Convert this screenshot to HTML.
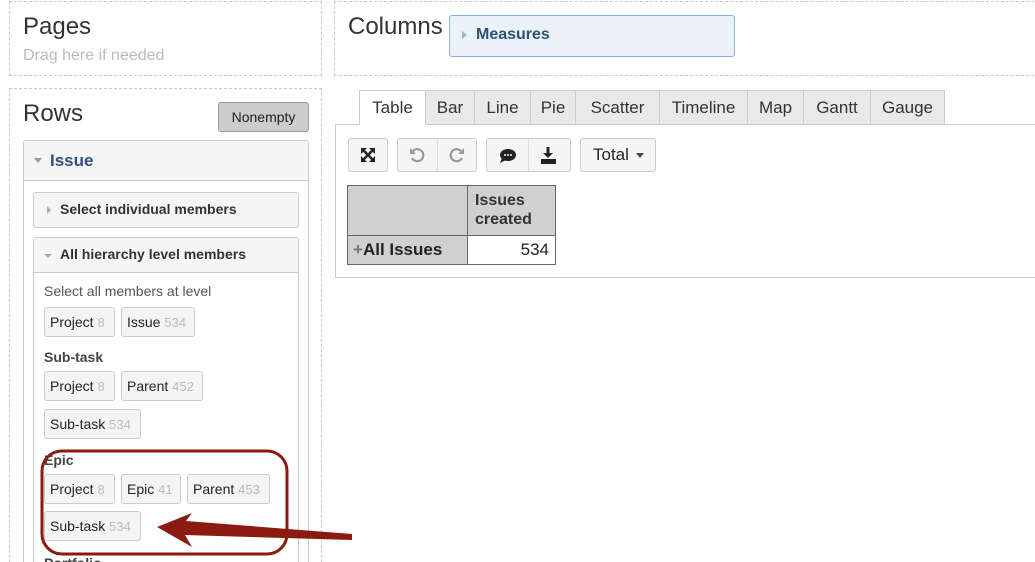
<!DOCTYPE html>
<html style="overflow:hidden;height:562px"><head><meta charset="utf-8"><style>
*{box-sizing:border-box}
body{margin:0;width:1035px;height:562px;overflow:hidden;background:#fff;font-family:"Liberation Sans",Arial,sans-serif;color:#333;position:relative}
.a{position:absolute}
.dash{border:1px dashed #c8c8c8}
.h{font-size:24px;color:#333}
.chip{position:absolute;height:30px;border:1px solid #ccc;border-radius:3px;background:#f4f4f4;font-size:14px;line-height:28px;padding:0 5px;color:#222;white-space:nowrap}
.chip span{color:#bbb;font-size:13px}
.lbl{position:absolute;font-size:14px;font-weight:bold;color:#444}
.tab{position:absolute;top:90px;height:35px;border:1px solid #ccc;border-left:none;background:#e9e9e9;font-size:17px;line-height:34px;text-align:center;color:#333}
.btn{position:absolute;top:138px;height:34px;border:1px solid #ccc;border-radius:3px;background:#f5f5f5}
.tri{display:inline-block;width:0;height:0}
</style></head><body>
<div class="a dash" style="left:9px;top:1px;width:313px;height:75px"></div>
<div class="a h" style="left:23px;top:13px">Pages</div>
<div class="a" style="left:23px;top:47px;font-size:16px;color:#bbb">Drag here if needed</div>

<div class="a dash" style="left:334px;top:1px;width:710px;height:75px"></div>
<div class="a h" style="left:348px;top:13px">Columns</div>
<div class="a" style="left:449px;top:15px;width:286px;height:42px;background:#eaf1f8;border:1px solid #8ab4dc;border-radius:3px"></div>
<div class="a" style="left:462px;top:31px;border-left:5px solid #9bb;border-top:4px solid transparent;border-bottom:4px solid transparent"></div>
<div class="a" style="left:476px;top:26px;font-size:16px;font-weight:bold;color:#2f5178">Measures</div>

<div class="a dash" style="left:9px;top:88px;width:313px;height:490px"></div>
<div class="a h" style="left:23px;top:100px">Rows</div>
<div class="a" style="left:218px;top:102px;width:91px;height:30px;background:#ccc;border:1px solid #999;border-radius:3px;font-size:14px;line-height:28px;text-align:center;color:#222">Nonempty</div>

<div class="a" style="left:23px;top:140px;width:286px;height:440px;border:1px solid #ccc;border-radius:3px"></div>
<div class="a" style="left:24px;top:141px;width:284px;height:40px;background:#f5f5f5;border-bottom:1px solid #ccc"></div>
<div class="a" style="left:34px;top:158px;border-top:5px solid #999;border-left:4px solid transparent;border-right:4px solid transparent"></div>
<div class="a" style="left:50px;top:151px;font-size:17px;font-weight:bold;color:#2f5178">Issue</div>

<div class="a" style="left:33px;top:192px;width:266px;height:36px;border:1px solid #ccc;border-radius:3px;background:#f5f5f5"></div>
<div class="a" style="left:47px;top:206px;border-left:4px solid #aaa;border-top:4px solid transparent;border-bottom:4px solid transparent"></div>
<div class="a" style="left:60px;top:201px;font-size:14px;font-weight:bold;color:#333">Select individual members</div>

<div class="a" style="left:33px;top:237px;width:266px;height:340px;border:1px solid #ccc;border-radius:3px"></div>
<div class="a" style="left:34px;top:238px;width:264px;height:35px;background:#f5f5f5;border-bottom:1px solid #ccc"></div>
<div class="a" style="left:44px;top:254px;border-top:4px solid #aaa;border-left:4px solid transparent;border-right:4px solid transparent"></div>
<div class="a" style="left:60px;top:246px;font-size:14px;font-weight:bold;color:#333">All hierarchy level members</div>

<div class="a" style="left:44px;top:283px;font-size:14px;color:#555">Select all members at level</div>
<div class="chip" style="left:44px;top:307px;width:71px">Project <span>8</span></div>
<div class="chip" style="left:121px;top:307px;width:74px">Issue <span>534</span></div>
<div class="lbl" style="left:44px;top:349px">Sub-task</div>
<div class="chip" style="left:44px;top:371px;width:71px">Project <span>8</span></div>
<div class="chip" style="left:121px;top:371px;width:82px">Parent <span>452</span></div>
<div class="chip" style="left:44px;top:409px;width:97px">Sub-task <span>534</span></div>
<div class="lbl" style="left:44px;top:452px">Epic</div>
<div class="chip" style="left:44px;top:474px;width:71px">Project <span>8</span></div>
<div class="chip" style="left:121px;top:474px;width:60px">Epic <span>41</span></div>
<div class="chip" style="left:187px;top:474px;width:83px">Parent <span>453</span></div>
<div class="chip" style="left:44px;top:511px;width:97px">Sub-task <span>534</span></div>
<div class="lbl" style="left:44px;top:555px">Portfolio</div>

<svg class="a" style="left:0;top:0" width="1035" height="562">
<rect x="42" y="451" width="245" height="103" rx="20" fill="none" stroke="#8b1a10" stroke-width="3"/>
<polygon points="352,534 352,540 185,535 192,547 157,527 192,513 186,521" fill="#8b1a10"/>
</svg>

<div class="a" style="left:335px;top:124px;width:710px;height:154px;border:1px solid #ccc"></div>
<div class="tab" style="left:359px;width:67px;background:#fff;border-left:1px solid #ccc;border-bottom-color:#fff">Table</div>
<div class="tab" style="left:426px;width:49px">Bar</div>
<div class="tab" style="left:475px;width:56px">Line</div>
<div class="tab" style="left:531px;width:45px">Pie</div>
<div class="tab" style="left:576px;width:84px">Scatter</div>
<div class="tab" style="left:660px;width:88px">Timeline</div>
<div class="tab" style="left:748px;width:56px">Map</div>
<div class="tab" style="left:804px;width:67px">Gantt</div>
<div class="tab" style="left:871px;width:74px">Gauge</div>

<div class="btn" style="left:348px;width:40px"><svg width="38" height="32"><g stroke="#222" stroke-width="2.4" fill="#222"><path d="M14 11 L24 21 M24 11 L14 21"/></g><g fill="#222"><path d="M12 9h6l-6 6z M26 9v6l-6-6z M12 23v-6l6 6z M26 23h-6l6-6z"/></g></svg></div>
<div class="btn" style="left:397px;width:80px"><div class="a" style="left:39px;top:0;width:1px;height:32px;background:#ddd"></div>
<svg class="a" style="left:0;top:0" width="78" height="32"><g fill="none" stroke="#999" stroke-width="2.2"><path d="M15 12 A6 6 0 1 1 14 19"/><path d="M63 12 A6 6 0 1 0 64 19"/></g><path d="M12 9v6h6z" fill="#999"/><path d="M66 9v6h-6z" fill="#999"/></svg></div>
<div class="btn" style="left:486px;width:85px"><div class="a" style="left:41px;top:0;width:1px;height:32px;background:#ddd"></div>
<svg class="a" style="left:0;top:0" width="83" height="32"><ellipse cx="21" cy="16" rx="8" ry="6" fill="#222"/><path d="M15 19 L13 24 L19 21z" fill="#222"/><circle cx="18" cy="16" r="1" fill="#fff"/><circle cx="21" cy="16" r="1" fill="#fff"/><circle cx="24" cy="16" r="1" fill="#fff"/><path d="M61 8v8" stroke="#222" stroke-width="3"/><path d="M56 14h10l-5 5z" fill="#222"/><rect x="54" y="20" width="15" height="5" fill="#222"/></svg></div>
<div class="btn" style="left:580px;width:76px;font-size:17px;line-height:32px;padding-left:12px;color:#222">Total <span class="tri" style="border-top:5px solid #444;border-left:4px solid transparent;border-right:4px solid transparent;vertical-align:middle;margin-left:2px"></span></div>

<div class="a" style="left:347px;top:185px;width:209px;height:80px;border:1px solid #666;background:#d0d0d0"></div>
<div class="a" style="left:467px;top:185px;width:1px;height:80px;background:#666"></div>
<div class="a" style="left:347px;top:235px;width:209px;height:1px;background:#666"></div>
<div class="a" style="left:468px;top:236px;width:87px;height:28px;background:#fff"></div>
<div class="a" style="left:475px;top:191px;font-size:16px;font-weight:bold;color:#333;line-height:19px">Issues<br>created</div>
<div class="a" style="left:353px;top:240px;font-size:17px;font-weight:bold;color:#222"><span style="color:#777">+</span>All Issues</div>
<div class="a" style="left:470px;top:240px;width:79px;text-align:right;font-size:17px;color:#222">534</div>
</body></html>
